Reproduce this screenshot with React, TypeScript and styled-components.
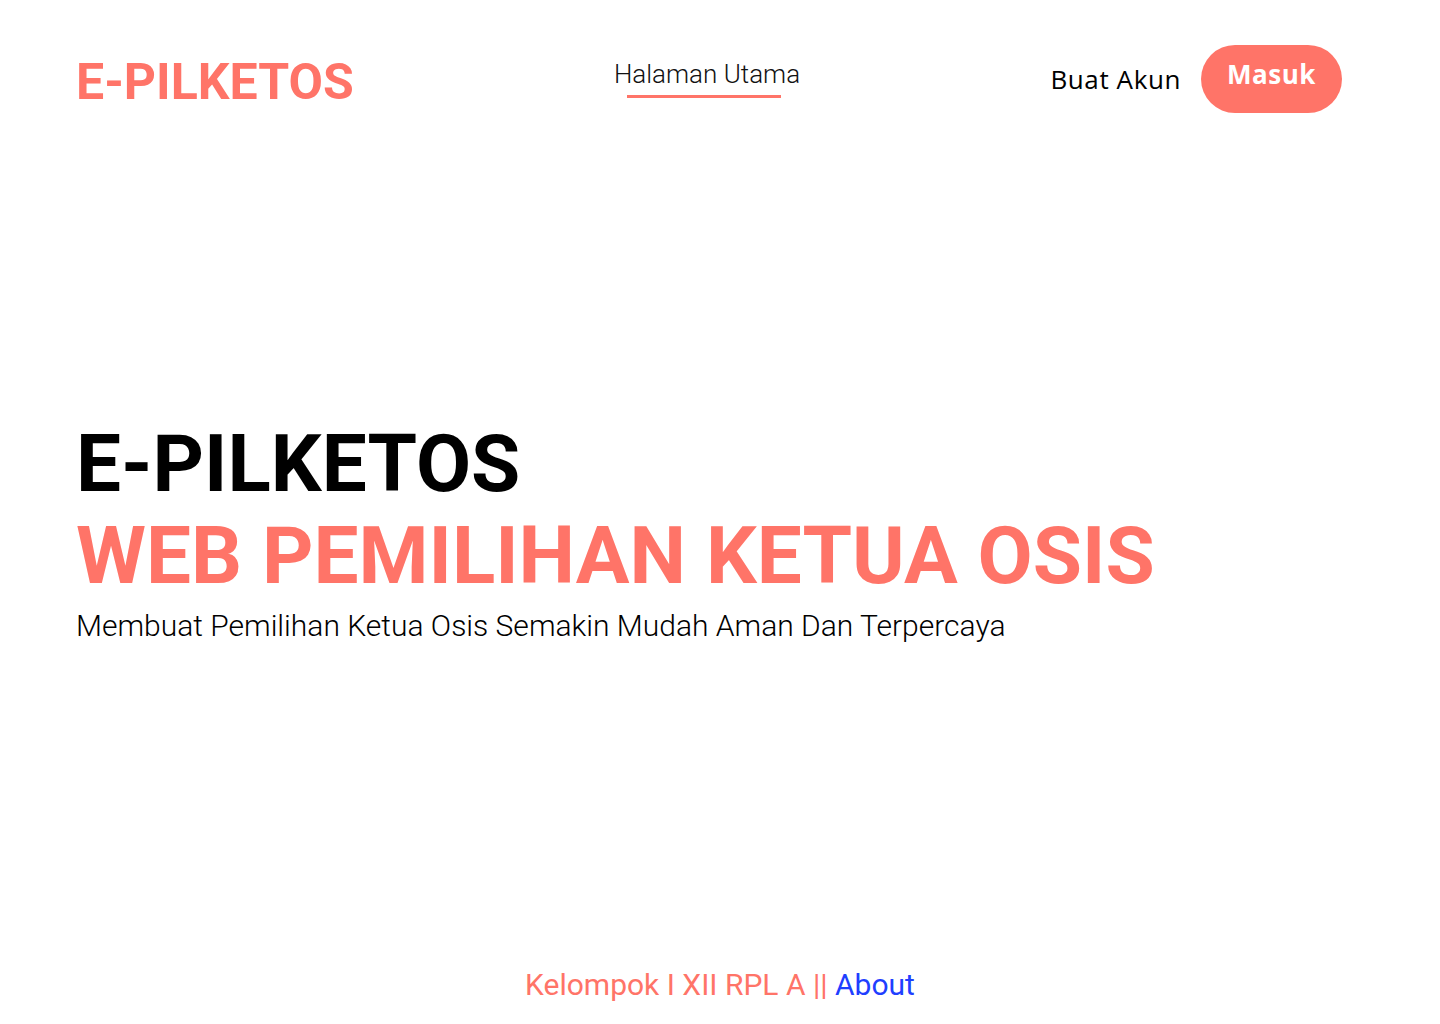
import React from "react";
import styled, { createGlobalStyle } from "styled-components";

const coral = "#ff7468";

const Global = createGlobalStyle`
  html, body { margin: 0; padding: 0; background: #fff; }
  body { font-family: Roboto, "Liberation Sans", sans-serif; }
  * { box-sizing: border-box; }
`;

const Page = styled.div`
  min-height: 1024px;
  display: flex;
  flex-direction: column;
`;

const Header = styled.header`
  display: grid;
  grid-template-columns: 1fr auto 1fr;
  align-items: center;
  padding: 45px 98px 0 76px;
  height: 113px;
`;

const Logo = styled.div`
  font-family: Roboto, sans-serif;
  font-weight: 700;
  font-size: 50px;
  color: ${coral};
  line-height: 1;
  margin-top: 6px;
`;

const NavLink = styled.a`
  position: relative;
  font-family: Roboto, sans-serif;
  font-weight: 300;
  font-size: 26px;
  color: #111;
  text-decoration: none;
  line-height: 1;
  padding-bottom: 11px;
  margin: 0 4px 0 0;
  &::after {
    content: "";
    position: absolute;
    left: 13px;
    right: 19px;
    bottom: 0;
    height: 3px;
    background: ${coral};
  }
`;

const Actions = styled.div`
  display: flex;
  align-items: center;
  justify-content: flex-end;
  gap: 20px;
`;

const TextButton = styled.a`
  font-family: "Open Sans", "Noto Sans", sans-serif;
  font-size: 26px;
  letter-spacing: 0.6px;
  color: #000;
  text-decoration: none;
`;

const PillButton = styled.button`
  font-family: "Open Sans", "Noto Sans", sans-serif;
  font-weight: 700;
  font-size: 26px;
  letter-spacing: 0.5px;
  color: #fff;
  background: ${coral};
  border: none;
  border-radius: 34px;
  width: 141px;
  height: 68px;
  padding: 0 0 11px;
  cursor: pointer;
`;

const Hero = styled.main`
  flex: 1;
  padding: 305px 78px 0 76px;
`;

const Title = styled.h1<{ $accent?: boolean }>`
  margin: 0;
  font-family: Roboto, sans-serif;
  font-weight: 700;
  font-size: 80px;
  line-height: 92px;
  color: ${(p) => (p.$accent ? coral : "#000")};
`;

const Subtitle = styled.p`
  margin: 6px 0 0 0;
  font-family: Roboto, sans-serif;
  font-weight: 300;
  font-size: 30px;
  line-height: 35px;
  color: #000;
`;

const Footer = styled.footer`
  text-align: center;
  padding-bottom: 22px;
  font-family: Roboto, sans-serif;
  font-size: 30px;
  color: ${coral};
`;

const FooterLink = styled.a`
  color: #1f3fff;
  text-decoration: none;
`;

export default function App() {
  return (
    <>
      <Global />
      <Page>
        <Header>
          <Logo>E-PILKETOS</Logo>
          <NavLink href="#">Halaman Utama</NavLink>
          <Actions>
            <TextButton href="#">Buat Akun</TextButton>
            <PillButton>Masuk</PillButton>
          </Actions>
        </Header>
        <Hero>
          <Title>E-PILKETOS</Title>
          <Title $accent>WEB PEMILIHAN KETUA OSIS</Title>
          <Subtitle>Membuat Pemilihan Ketua Osis Semakin Mudah Aman Dan Terpercaya</Subtitle>
        </Hero>
        <Footer>
          Kelompok I XII RPL A || <FooterLink href="#">About</FooterLink>
        </Footer>
      </Page>
    </>
  );
}
